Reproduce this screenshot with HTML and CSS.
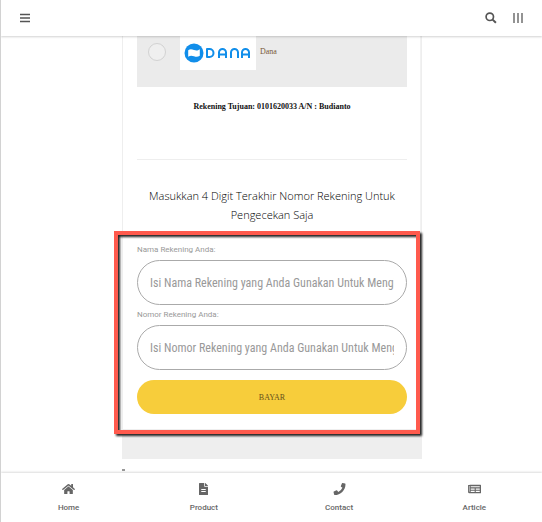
FILE: index.html
```html
<!DOCTYPE html>
<html lang="id">
<head>
  <meta charset="UTF-8" />
  <meta name="viewport" content="width=device-width, initial-scale=1.0"/>
  <title>Pembayaran</title>
  <link rel="stylesheet" href="styles.css">
</head>
<body>
  <!-- HEADER -->
  <header class="topbar">
    <button type="button" class="icon-btn" aria-label="Menu">
      <svg width="10" height="10" viewBox="0 0 10 10" fill="none" stroke="#555" stroke-width="1.6"><path d="M0 1.5h10M0 5h10M0 8.5h10"/></svg>
    </button>
    <div class="topbar-right">
      <button type="button" class="icon-btn" aria-label="Search">
        <svg width="12" height="12" viewBox="0 0 12 12" fill="none" stroke="#555"><circle cx="4.8" cy="4.8" r="3.7" stroke-width="1.7"/><path d="M7.6 7.6l3.3 3.2" stroke-width="2"/></svg>
      </button>
      <button type="button" class="icon-btn" aria-label="Options">
        <svg width="10" height="10" viewBox="0 0 10 10" fill="none" stroke="#666" stroke-width="1.4"><path d="M1 0v10M5 0v10M9 0v10"/></svg>
      </button>
    </div>
  </header>

  <main>
    <div class="card">
      <!-- Payment method -->
      <label class="method">
        <input type="radio" name="method" value="dana" />
        <span class="method-logo">
          <svg width="20" height="20" viewBox="0 0 20 20"><circle cx="10" cy="10" r="9.5" fill="#118eea"/><path d="M4.2 7.3c2-1.500 3.600-1 5.800-.3s3.700.7 5.800-.8v6.500c-2 1.500-3.700 1.300-5.800.6s-3.800-.9-5.800.5z" fill="#fff"/></svg>
          <svg width="46" height="12" viewBox="0 0 46 12" fill="none" stroke="#118eea" stroke-width="2" stroke-linejoin="round"><title>DANA</title><path d="M2 2h2.500a4 4 0 0 1 0 8H2zM14 11V5.500a3.500 3.500 0 0 1 7 0V11M14 7.500h7M26 11V5.500a3.500 3.500 0 0 1 7 0V11M37 11V5.500a3.500 3.500 0 0 1 7 0V11M37 7.500h7"/></svg>
        </span>
        <span class="method-name">Dana</span>
      </label>
      <p class="account">Rekening Tujuan: 0101620033 A/N : Budianto</p>
      <hr />

      <h2>Masukkan 4 Digit Terakhir Nomor Rekening Untuk Pengecekan Saja</h2>

      <!-- Payment form -->
      <form class="pay-form">
        <label for="accountName">Nama Rekening Anda:</label>
        <input type="text" id="accountName" placeholder="Isi Nama Rekening yang Anda Gunakan Untuk Mengirim" />
        <label for="accountNumber">Nomor Rekening Anda:</label>
        <input type="text" id="accountNumber" placeholder="Isi Nomor Rekening yang Anda Gunakan Untuk Mengirim" />
        <button type="submit">BAYAR</button>
        <div class="highlight"></div>
      </form>
    </div>
    <div class="card-foot"></div>
    <div class="next-mark"></div>
  </main>

  <!-- BOTTOM NAV -->
  <nav class="bottom-nav">
    <a href="#">
      <svg width="13" height="12" viewBox="0 0 576 512" fill="#666"><path d="M280 149L96 300v164a16 16 0 0 0 16 16h112a16 16 0 0 0 16-16v-96a16 16 0 0 1 16-16h64a16 16 0 0 1 16 16v96a16 16 0 0 0 16 16h112a16 16 0 0 0 16-16V300L296 149a12 12 0 0 0-16 0zM571 251l-83-69V44a12 12 0 0 0-12-12h-56a12 12 0 0 0-12 12v73l-90-74a48 48 0 0 0-61 0L4 251a12 12 0 0 0-1 17l25 31a12 12 0 0 0 17 2L280 107a12 12 0 0 1 16 0l235 194a12 12 0 0 0 17-2l25-31a12 12 0 0 0-2-17z"/></svg>
      <span>Home</span>
    </a>
    <a href="#">
      <svg width="13" height="12" viewBox="0 0 384 512" fill="#666"><path d="M224 136V0H24A24 24 0 0 0 0 24v464a24 24 0 0 0 24 24h336a24 24 0 0 0 24-24V160H248a24 24 0 0 1-24-24zm64 248H96v-44h192zm0-88H96v-44h192zM384 122v6H256V0h6a24 24 0 0 1 17 7l98 98a24 24 0 0 1 7 17z"/></svg>
      <span>Product</span>
    </a>
    <a href="#">
      <svg width="13" height="12" viewBox="0 0 512 512" fill="#666"><path d="M493 25L389 1a24 24 0 0 0-27 14l-48 112a24 24 0 0 0 7 28l61 49a371 371 0 0 1-177 177l-50-60a24 24 0 0 0-28-7L15 362a24 24 0 0 0-14 27l24 104a24 24 0 0 0 23 19c256 0 464-207 464-464a24 24 0 0 0-19-23z"/></svg>
      <span>Contact</span>
    </a>
    <a href="#">
      <svg width="13" height="12" viewBox="0 0 576 512" fill="#666"><path fill-rule="evenodd" d="M552 64H88a24 24 0 0 0-23 16H24A24 24 0 0 0 0 104v272a72 72 0 0 0 72 72h480a24 24 0 0 0 24-24V88a24 24 0 0 0-24-24zM40 128h24v248a16 16 0 0 1-24 0zM120 130h400v48H120zM120 232h176v52H120zM344 232h176v52H344zM120 338h176v48H120zM344 338h176v48H344z"/></svg>
      <span>Article</span>
    </a>
  </nav>
</body>
</html>
```

FILE: styles.css
```css
/* Reset & fonts */
* { margin:0; padding:0; box-sizing:border-box }
body {
  font-family:Roboto,"Liberation Sans",sans-serif;
  background:#fff; border-left:1px solid #d2d2d2;
  height:100vh; display:flex; flex-direction:column;
}

/* Header */
.topbar {
  flex:none; height:36px; padding:0 19px;
  display:flex; align-items:center; justify-content:space-between;
  background:#fff; box-shadow:0 1px 2px rgba(0,0,0,0.18); z-index:1;
}
.topbar-right { display:flex; gap:16px; }
.icon-btn { display:flex; align-items:center; border:none; background:none; cursor:pointer; }

/* Content */
main { flex:1; min-height:0; overflow:hidden; padding-left:1px; }
.card {
  width:100%; max-width:300px; margin:0 auto; padding:0 14px 15px;
  border-left:1px solid #eee; border-right:1px solid #eee;
  box-shadow:inset -1px 0 #f2f2f2;
}

.method { display:flex; height:51px; background:#ebebeb; }
.method input {
  appearance:none; width:18px; height:18px; margin:7px 14px 0 11px;
  border:1px solid #d2d2d2; border-radius:50%; background:#efefef;
}
.method-logo {
  display:flex; align-items:center; gap:1px;
  width:76px; height:34px; padding-left:4px; background:#fff;
}
.method-name { margin:10px 0 0 4px; font:8px/12px "Liberation Serif",serif; color:#7a5a38; }

.account {
  margin-top:14px; text-align:center; color:#111;
  font:bold 8px/12px "Liberation Serif",serif;
}
hr { margin-top:46px; border:none; border-top:1px solid #eee; }
h2 {
  margin-top:26px; text-align:center; color:#000;
  font:300 11px/19px "Open Sans",sans-serif;
}

/* Form */
.pay-form { position:relative; margin-top:21px; }
.pay-form label { display:block; height:15px; font-size:8px; line-height:10px; color:#999; }
.pay-form input {
  display:block; width:100%; height:45px; margin-bottom:5px; padding:1px 12px 0;
  border:1px solid #aaa; border-radius:23px; background:#fff;
  font:12px "Roboto Condensed",Roboto,sans-serif;
}
.pay-form input::placeholder { color:#999; }
.pay-form button {
  display:block; width:100%; height:34px; margin-top:10px;
  border:none; border-radius:17px; background:#f7cd3b; color:#66501c;
  font:8px "Liberation Serif",serif; cursor:pointer;
}
.highlight {
  position:absolute; inset:-14px -13px -20px -23px;
  border:4px solid #ff5a4d; filter:drop-shadow(2px 2px 1px #222);
  pointer-events:none;
}

.card-foot { max-width:300px; height:30px; margin:0 auto; background:#eee; }
.next-mark {
  max-width:300px; height:4px; margin:10px auto 0;
  background:linear-gradient(#999,#999) left top / 3px 2px no-repeat;
}

/* Bottom nav */
.bottom-nav {
  flex:none; height:49px; display:flex; z-index:1;
  background:#fff; box-shadow:0 -1px 2px rgba(0,0,0,0.14);
}
.bottom-nav a {
  flex:1; display:flex; flex-direction:column; align-items:center;
  gap:8px; padding-top:10px; text-decoration:none;
  color:#666; font-size:8px; line-height:10px; font-weight:500;
}
```
